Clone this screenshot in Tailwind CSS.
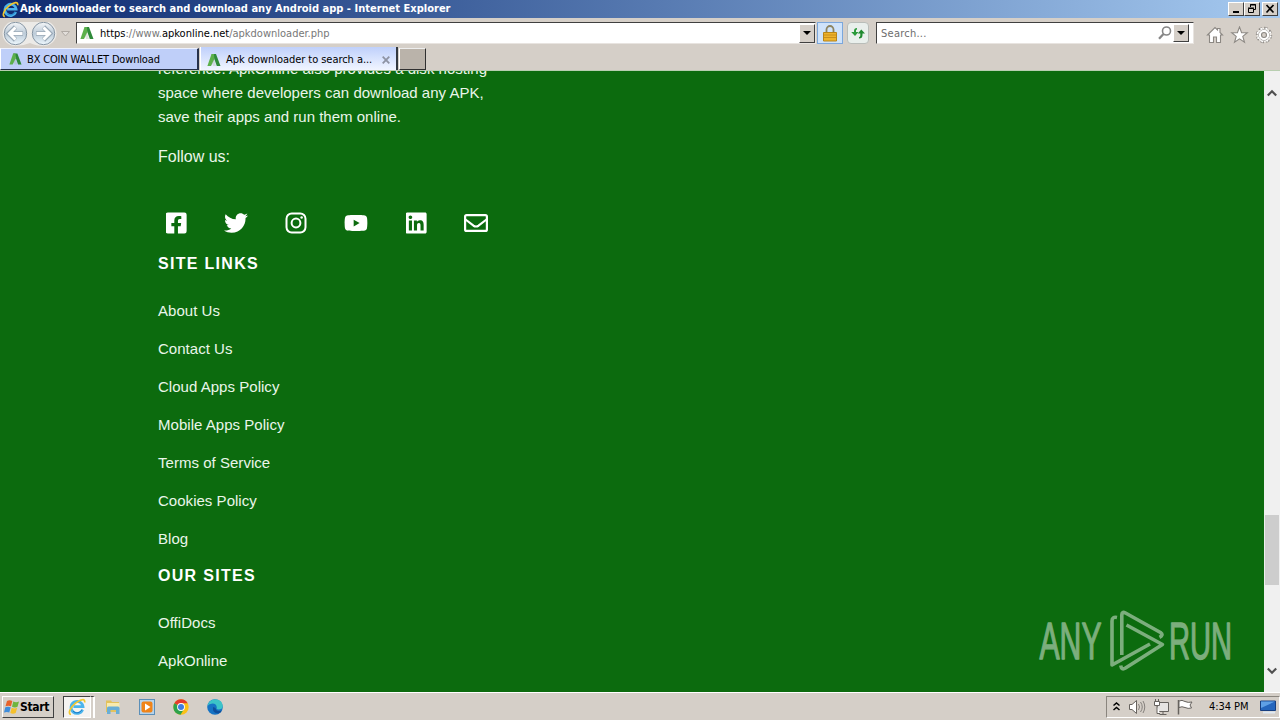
<!DOCTYPE html>
<html lang="en">
<head>
  <meta charset="UTF-8" />
  <meta name="viewport" content="width=device-width, initial-scale=1.0" />
  <title>Apk downloader to search and download any Android app</title>
  <script src="https://cdn.jsdelivr.net/npm/@tailwindcss/browser@4"></script>
</head>
<body class="w-[1280px] h-[720px] overflow-hidden flex flex-col bg-[#d5cfc8] text-black text-[11px] font-['DejaVu_Sans_Condensed','DejaVu_Sans',sans-serif]">

  <!-- Shared symbols -->
  <svg class="hidden">
    <symbol id="apk" viewBox="0 0 14 14">
      <path d="M4.5 1H9L13.5 13H9.8L6.8 4.5Z" fill="#2f8a3a" />
      <path d="M4.5 1H7L7.4 6.2L4 13H.4Z" fill="#5cb04b" />
      <path d="M7 6L9 13H6L5 10Z" fill="#a5b5a5" opacity=".35" />
    </symbol>
    <symbol id="ie" viewBox="0 0 18 18">
      <path d="M14.6 11.7A6 6 0 1 1 15 8.7H5.4" fill="none" stroke="#4bb4ec" stroke-width="2.8" />
      <path d="M14 11.5A5.4 5.4 0 0 1 5 13" fill="none" stroke="#1b78c4" stroke-width="1" />
      <path d="M3 16.5C-.5 16 2 9.5 7.500 5.200S17.500 .500 16.600 4.500" fill="none" stroke="#f2c72d" stroke-width="1.700" />
    </symbol>
  </svg>

  <!-- Title bar -->
  <header class="h-[18px] shrink-0 flex items-center pl-[2px] pr-[2px] bg-linear-to-r from-[#0f2a70] to-[#a6caf0] text-white">
    <svg class="w-[17px] h-[17px]"><use href="#ie" /></svg>
    <h1 class="ml-px font-bold whitespace-nowrap tracking-[0.01px]">Apk downloader to search and download any Android app - Internet Explorer</h1>
    <div class="ml-auto flex h-[14px] text-black">
      <div class="w-4 bg-[#d5cfc8] border border-t-white border-l-white border-r-[#404040] border-b-[#404040]">
        <svg class="w-[14px] h-3" viewBox="0 0 14 12"><path d="M4 9h6" stroke="#000" stroke-width="2" /></svg>
      </div>
      <div class="w-4 bg-[#d5cfc8] border border-t-white border-l-white border-r-[#404040] border-b-[#404040]">
        <svg class="w-[14px] h-3" viewBox="0 0 14 12" fill="none" stroke="#000">
          <path d="M5.500 4V1.500H10.500V6.500H9M5 2H11" /><path d="M3.500 5.500H8.500V9.500H3.500ZM3 5H9" />
        </svg>
      </div>
      <div class="ml-[2px] w-4 bg-[#d5cfc8] border border-t-white border-l-white border-r-[#404040] border-b-[#404040]">
        <svg class="w-[14px] h-3" viewBox="0 0 14 12"><path d="M3.500 2L10.500 9.500M10.500 2L3.500 9.500" stroke="#000" stroke-width="1.700" /></svg>
      </div>
    </div>
  </header>

  <!-- Navigation bar -->
  <div class="h-[29px] shrink-0 flex items-start pt-1">
    <svg class="w-[76px] h-[25px] shrink-0" viewBox="0 22 76 25">
      <defs>
        <linearGradient id="nav" x2="0" y2="1">
          <stop offset="0" stop-color="#f4f6f8" /><stop offset=".5" stop-color="#bccbd8" /><stop offset="1" stop-color="#edf7fd" />
        </linearGradient>
      </defs>
      <path d="M15 21H44A12 12 0 0 1 44 46Q36 46 30 43Q23 46 15 46A12 12 0 0 1 15 21Z" fill="#eceae7" />
      <g fill="url(#nav)" stroke="#8796a4">
        <circle cx="15.500" cy="33.500" r="11.200" />
        <circle cx="43.500" cy="33.500" r="11.200" />
      </g>
      <g fill="none" stroke="#9aa9b7" stroke-width="4.600">
        <path d="M23 33.500H10M15.500 27L9 33.500L15.500 40" /><path d="M36 33.500H49M43.500 27L50 33.500L43.500 40" />
      </g>
      <g fill="none" stroke="#fff" stroke-width="3">
        <path d="M22.500 33.500H10M15.500 27.500L9.500 33.500L15.500 39.500" /><path d="M36.500 33.500H49M43.500 27.500L49.500 33.500L43.500 39.500" />
      </g>
      <path d="M61.500 31.500H69.500L65.500 36Z" fill="#e2deda" stroke="#b0aaa4" />
    </svg>
    <div class="w-[740px] h-[22px] flex items-center bg-white border border-t-[#404040] border-l-[#404040] border-r-[#e8e4e0] border-b-[#e8e4e0] pl-[3px]">
      <svg class="w-[14px] h-[14px]"><use href="#apk" /></svg>
      <p class="ml-[6px] pt-[2px] text-[#777] whitespace-nowrap"><span class="text-black">https</span>://www.<span class="text-black">apkonline.net</span>/apkdownloader.php</p>
      <div class="ml-auto w-4 h-[19px] flex items-center justify-center bg-[#d5cfc8] border border-t-white border-l-white border-r-[#404040] border-b-[#404040]">
        <svg class="w-2 h-1" viewBox="0 0 8 4"><path d="M0 0H8L4 4Z" /></svg>
      </div>
    </div>
    <div class="ml-px w-[26px] h-[22px] flex items-center justify-center bg-[#cfe3fa] border border-[#7ba7dc]">
      <svg class="w-[14px] h-[17px]" viewBox="0 0 14 17">
        <path d="M3.500 8V4.500A3.500 3.500 0 0 1 10.500 4.500V8" fill="none" stroke="#8d8460" stroke-width="1.800" />
        <path d="M.5 7.500H13.500V16H.5Z" fill="#eeb32c" stroke="#b98518" />
        <path d="M1 10H13M1 12.500H13" stroke="#c98f1c" />
      </svg>
    </div>
    <div class="ml-1 w-[22px] h-[22px] flex items-center justify-center bg-[#e9efec] border border-[#b9bdb9] rounded-sm">
      <svg class="w-4 h-4" viewBox="0 0 16 16">
        <path d="M7 3Q4 3 4 6V7H1.200L5 11L8.500 7H6V5.500Q6 4.500 7 4.500Z" fill="#2a9a3b" />
        <path d="M9 13.500Q12.500 13.500 12.500 10V8.500H15L11.300 4.500L7.800 8.500H10.300V10.500Q10.300 12 9 12Z" fill="#1f8a30" />
      </svg>
    </div>
    <div class="ml-[7px] w-[318px] h-[22px] flex items-center bg-white border border-t-[#404040] border-l-[#404040] border-r-[#e8e4e0] border-b-[#e8e4e0] pl-1 pr-1">
      <span class="pt-[2px] tracking-[0.25px] text-[#6d6d6d]">Search...</span>
      <svg class="ml-auto w-[14px] h-[14px]" viewBox="0 0 14 14" fill="none" stroke="#868686">
        <circle cx="8.500" cy="5" r="4" stroke-width="1.600" /><path d="M5.500 8L1 12.800" stroke-width="2.300" />
      </svg>
      <div class="ml-[1px] w-4 h-[18px] flex items-center justify-center bg-[#d5cfc8] border border-t-white border-l-white border-r-[#404040] border-b-[#404040]">
        <svg class="w-2 h-1" viewBox="0 0 8 4"><path d="M0 0H8L4 4Z" /></svg>
      </div>
    </div>
    <svg class="ml-3 mt-[4px] w-[68px] h-[18px]" viewBox="1206 26 68 18" fill="#fff" stroke="#8c8883" stroke-width="1.100">
      <path d="M1207.500 35L1215 27.500L1217.500 30V28.500H1220V32.500L1222.500 35H1220.500V42.500H1216.500V37H1213.500V42.500H1209.500V35Z" />
      <path d="M1239.500 27L1241.600 32.600L1247.300 32.800L1242.800 36.400L1244.500 42.300L1239.500 38.900L1234.500 42.300L1236.200 36.400L1231.700 32.800L1237.400 32.600Z" />
      <circle cx="1264" cy="35" r="6.700" stroke-width="3" stroke-dasharray="3.160 2.100" />
      <circle cx="1264" cy="35" r="6.300" stroke="#fff" stroke-width="2.600" stroke-dasharray="1.700 3.248" stroke-dashoffset="-.6" />
      <circle cx="1264" cy="35" r="5.300" stroke-width=".8" />
      <circle cx="1264" cy="35" r="4.300" stroke="#fff" stroke-width="1.600" />
      <circle cx="1264" cy="35" r="2.500" fill="#d5cfc8" />
    </svg>
  </div>

  <!-- Tabs -->
  <nav class="h-6 shrink-0 flex items-end border-b border-[#b8ceb0]">
    <div class="w-[199px] h-[22px] flex items-center pl-2 bg-[#bfcff9] border border-t-[#eef2ff] border-l-white border-r-2 border-r-[#27314a] border-b-[#27314a]">
      <svg class="w-[13px] h-[14px]"><use href="#apk" /></svg>
      <span class="ml-[5px] pt-[3px] tracking-[-0.16px] whitespace-nowrap">BX COIN WALLET Download</span>
    </div>
    <div class="ml-px w-[198px] h-[23px] flex items-center pl-[6px] pr-[6px] bg-linear-to-b from-[#bfd0fb] to-[#f1f5ff] border-l border-l-white border-r-2 border-r-[#33383f]">
      <svg class="mt-[2px] w-[14px] h-[14px]"><use href="#apk" /></svg>
      <span class="ml-[5px] pt-[4px] tracking-[-0.05px] whitespace-nowrap">Apk downloader to search a...</span>
      <svg class="ml-auto mt-[2px] w-[8px] h-[8px]" viewBox="0 0 8 8"><path d="M.7 .7L7.300 7.300M7.300 .7L.7 7.300" stroke="#8e93a3" stroke-width="1.800" /></svg>
    </div>
    <div class="ml-px w-[27px] h-[22px] bg-[#bab3aa] border border-t-[#eee] border-l-white border-r-[#303030] border-b-[#303030]"></div>
  </nav>

  <!-- Page -->
  <div class="h-[621px] shrink-0 flex">
    <main class="relative flex-1 overflow-hidden bg-[#0c6b0e] pl-[158px] text-[#eaf6ea] text-[15px] font-['Liberation_Sans',Arial,sans-serif]">
      <p class="-mt-[14px] w-[345px] leading-6 tracking-[0.01px]">reference. ApkOnline also provides a disk hosting<br />space where developers can download any APK,<br />save their apps and run them online.</p>
      <p class="mt-4 text-base leading-6">Follow us:</p>

      <div class="mt-[42px] -ml-3 flex h-6 text-white">
        <a class="w-[60px] flex justify-center"><svg class="h-6" viewBox="8 0 448 512" fill="currentColor"><path d="M400 32H48A48 48 0 0 0 0 80v352a48 48 0 0 0 48 48h137.250V327.690h-63V256h63v-54.640c0-62.150 37-96.480 93.670-96.480 27.140 0 55.520 4.840 55.520 4.840v61h-31.270c-30.810 0-40.420 19.120-40.420 38.730V256h68.780l-11 71.690h-57.780V480H400a48 48 0 0 0 48-48V80a48 48 0 0 0-48-48z" /></svg></a>
        <a class="w-[60px] flex justify-center"><svg class="h-6" viewBox="0 0 512 512" fill="currentColor"><path d="M459.370 151.716c.325 4.548.325 9.097.325 13.645 0 138.720-105.583 298.558-298.558 298.558-59.452 0-114.680-17.219-161.137-47.106 8.447.974 16.568 1.299 25.340 1.299 49.055 0 94.213-16.568 130.274-44.832-46.132-.975-84.792-31.188-98.112-72.772 6.498.974 12.995 1.624 19.818 1.624 9.421 0 18.843-1.300 27.614-3.573-48.081-9.747-84.143-51.980-84.143-102.985v-1.299c13.969 7.797 30.214 12.670 47.431 13.319-28.264-18.843-46.781-51.005-46.781-87.391 0-19.492 5.197-37.360 14.294-52.954 51.655 63.675 129.300 105.258 216.365 109.807-1.624-7.797-2.599-15.918-2.599-24.040 0-57.828 46.782-104.934 104.934-104.934 30.213 0 57.502 12.670 76.670 33.137 23.715-4.548 46.456-13.320 66.599-25.340-7.798 24.366-24.366 44.833-46.132 57.827 21.117-2.273 41.584-8.122 60.426-16.243-14.292 20.791-32.161 39.308-52.628 54.253z" /></svg></a>
        <a class="w-[60px] flex justify-center">
          <svg class="w-6 h-6" viewBox="0 0 24 24" fill="none" stroke="currentColor" stroke-width="2">
            <rect x="2.500" y="2.500" width="19" height="19" rx="5.200" /><circle cx="12" cy="12" r="4.400" /><circle cx="17.600" cy="6.400" r="1.250" fill="currentColor" stroke="none" />
          </svg>
        </a>
        <a class="w-[60px] flex justify-center"><svg class="w-6 h-6" viewBox="0 0 576 512" fill="currentColor"><path d="M549.655 124.083c-6.281-23.650-24.787-42.276-48.284-48.597C458.781 64 288 64 288 64S117.220 64 74.629 75.486c-23.497 6.322-42.003 24.947-48.284 48.597-11.412 42.867-11.412 132.305-11.412 132.305s0 89.438 11.412 132.305c6.281 23.650 24.787 41.500 48.284 47.821C117.220 448 288 448 288 448s170.780 0 213.371-11.486c23.497-6.321 42.003-24.171 48.284-47.821 11.412-42.867 11.412-132.305 11.412-132.305s0-89.438-11.412-132.305zm-317.510 213.508V175.185l142.739 81.205-142.739 81.201z" /></svg></a>
        <a class="w-[60px] flex justify-center"><svg class="h-6" viewBox="8 0 448 512" fill="currentColor"><path d="M416 32H31.900C14.300 32 0 46.500 0 64.300v383.400C0 465.500 14.300 480 31.900 480H416c17.600 0 32-14.500 32-32.300V64.300c0-17.800-14.400-32.300-32-32.300zM135.400 416H69V202.200h66.500V416zm-33.200-243c-21.300 0-38.500-17.300-38.500-38.500S80.900 96 102.200 96c21.200 0 38.500 17.300 38.500 38.500 0 21.300-17.200 38.500-38.500 38.500zm282.100 243h-66.400V312c0-24.800-.5-56.700-34.500-56.700-34.600 0-39.900 27-39.900 54.900V416h-66.400V202.200h63.700v29.200h.9c8.900-16.800 30.600-34.500 62.900-34.500 67.200 0 79.700 44.300 79.700 101.900V416z" /></svg></a>
        <a class="w-[60px] flex justify-center">
          <svg class="w-6 h-6" viewBox="0 0 24 24" fill="none" stroke="currentColor" stroke-width="2.200">
            <rect x="1.100" y="4.100" width="21.800" height="15.800" rx="1.500" /><path d="M1.500 8.500L9.500 14.700Q12 16.300 14.500 14.700L22.500 8.500" />
          </svg>
        </a>
      </div>

      <h2 class="mt-[19px] text-base leading-5 font-bold tracking-[1.3px] text-white">SITE LINKS</h2>
      <ul class="mt-[18px] leading-[38px] tracking-[0.03px]">
        <li>About Us</li>
        <li>Contact Us</li>
        <li>Cloud Apps Policy</li>
        <li>Mobile Apps Policy</li>
        <li>Terms of Service</li>
        <li>Cookies Policy</li>
        <li>Blog</li>
      </ul>
      <h2 class="mt-[8px] text-base leading-5 font-bold tracking-[1.3px] text-white">OUR SITES</h2>
      <ul class="mt-[18px] leading-[38px] tracking-[0.03px]">
        <li>OffiDocs</li>
        <li>ApkOnline</li>
      </ul>

      <!-- Watermark -->
      <svg class="absolute left-[1034px] top-[534px] w-[204px] h-[72px] opacity-55" viewBox="1034 605 204 72" fill="none" stroke="#d8e6d8" stroke-width="3.600" stroke-linejoin="round">
        <g fill="#d8e6d8" stroke-width="1.300" font-family="Liberation Sans Narrow, Liberation Sans, sans-serif" font-size="52">
          <text x="1039.500" y="659" textLength="62" lengthAdjust="spacingAndGlyphs">ANY</text>
          <text x="1169" y="659" textLength="63" lengthAdjust="spacingAndGlyphs">RUN</text>
        </g>
        <path d="M1117 617.500Q1112 616.500 1112 621V665L1150 644" />
        <path d="M1121.800 655V615Q1121.800 611 1125.500 613L1160.500 632.500Q1164 635 1159.500 637.300" />
        <path d="M1126.500 625L1162.500 644.500L1125.500 668Q1121.500 670.500 1120.700 665.500" />
      </svg>
    </main>

    <!-- Scrollbar -->
    <aside class="w-4 flex flex-col items-center bg-[#f0f0f0]">
      <svg class="mt-[18px] w-[10px] h-[8px]" viewBox="0 0 10 8"><path d="M.8 6.500L5 2.300L9.200 6.500" fill="none" stroke="#505050" stroke-width="2.200" /></svg>
      <div class="mt-[418px] w-[14px] h-[70px] bg-[#cdcdcd]"></div>
      <svg class="mt-[82px] w-[10px] h-[8px]" viewBox="0 0 10 8"><path d="M.8 1.500L5 5.700L9.200 1.500" fill="none" stroke="#505050" stroke-width="2.200" /></svg>
    </aside>
  </div>

  <!-- Taskbar -->
  <footer class="h-7 shrink-0 flex items-center border-t border-t-white bg-[#d5cfc8]">
    <button class="ml-[2px] w-[52px] h-[22px] flex items-center pl-px bg-[#d5cfc8] border border-t-white border-l-white border-r-[#404040] border-b-[#404040]">
      <svg class="w-4 h-4 shrink-0" viewBox="0 0 16 16">
        <path d="M3 2Q5.500 .5 8.300 2L7 7.300Q4.500 6 1.500 7.300Z" fill="#e8622a" />
        <path d="M9.300 2.500Q12 3.800 15 2.500L13.500 7.800Q11 9 8 7.700Z" fill="#6fb53c" />
        <path d="M1.300 8.300Q4 7 6.700 8.300L5.300 13.500Q3 12.300 0 13.500Z" fill="#3f8ddb" />
        <path d="M7.700 8.800Q10.500 10 13.200 8.800L11.700 14Q9 15.300 6.300 14Z" fill="#f5c02c" />
      </svg>
      <span class="font-bold text-xs leading-4 tracking-[-0.3px]">Start</span>
    </button>
    <div class="ml-[9px] w-[28px] h-[22px] flex items-center justify-center bg-[#f5f3f1] border border-t-[#404040] border-l-[#404040] border-r-white border-b-white">
      <svg class="w-[18px] h-[18px]"><use href="#ie" /></svg>
    </div>
    <div class="w-[4px] h-[22px] border-t border-t-[#404040] border-r-2 border-r-white bg-[#d5cfc8]"></div>
    <svg class="ml-[10px] w-[16px] h-[16px]" viewBox="0 0 16 16">
      <path d="M1 1.500H6L7 3H14V13H1Z" fill="#e3c25c" /><path d="M2 4H14.500V9H2Z" fill="#f9ebae" />
      <path d="M2 15V9Q2 7.500 3.500 7.500H13Q14.500 7.500 14.500 9V15H11V11H5.500V15Z" fill="#69aed6" />
    </svg>
    <svg class="ml-[18px] w-4 h-4" viewBox="0 0 16 16">
      <rect x=".5" y=".5" width="15" height="15" fill="#b7d3ea" stroke="#5b8fb8" />
      <rect x="2.500" y="2.500" width="11" height="11" rx="2" fill="#f08418" /><path d="M6 4.500L11.500 8L6 11.500Z" fill="#fff" />
    </svg>
    <svg class="ml-[18px] w-4 h-4" viewBox="0 0 16 16">
      <circle cx="8" cy="8" r="7.700" fill="#fbc116" />
      <path d="M8 8L1.330 4.150A7.700 7.700 0 0 1 14.670 4.150H8Z" fill="#e33b2e" />
      <path d="M1.330 4.150A7.700 7.700 0 0 0 7.500 15.700L11 10L8 8Z" fill="#2da24c" />
      <circle cx="8" cy="8" r="3.900" fill="#fff" /><circle cx="8" cy="8" r="3" fill="#3f7de0" />
    </svg>
    <svg class="ml-[18px] w-4 h-4" viewBox="0 0 16 16">
      <circle cx="8" cy="8" r="7.800" fill="#1673c4" />
      <path d="M.4 7Q2 .2 8.500 .2Q15.500 1 15.800 7Q15.500 10.500 11.500 10.500Q9 10.300 9.800 8.500Q9.500 4.500 5.500 4.500Q2 4.500 .4 7Z" fill="#3cc4c8" />
      <path d="M6 8Q5 14 11.500 14.500Q14 13.500 15 11.500Q9 13 8.500 9Z" fill="#0f4f9c" />
    </svg>

    <div class="ml-auto w-[174px] h-[22px] flex items-center border border-t-[#8a857e] border-l-[#8a857e] border-r-white border-b-white">
      <svg class="ml-[6px] w-[7px] h-[9px]" viewBox="0 0 7 9" fill="none" stroke="#000" stroke-width="1.500"><path d="M.5 3.500L3.500 1L6.500 3.500M.5 8L3.500 5.500L6.500 8" /></svg>
      <svg class="ml-[9px] w-[64px] h-[18px]" viewBox="1129 698 64 18" fill="#fff" stroke="#66625e">
        <path d="M1129.500 704.500H1132L1136.500 700.500V713.500L1132 709.500H1129.500Z" />
        <path d="M1138.500 704Q1140.500 707 1138.500 710M1140.500 702Q1144 707 1140.500 712M1143 701Q1146.500 707 1143 713" fill="none" stroke="#85817d" />
        <path d="M1157.500 702.500H1168.500V711.500H1157.500ZM1159.500 714.500H1166.500M1163 711.500V714.500" fill="#e6e4e2" />
        <path d="M1154.500 701.500H1159.500V705.500H1154.500ZM1155.500 699V701.500M1158.500 699V701.500M1157 705.500V713.500H1160" />
        <path d="M1178.500 700V714.500" stroke-width="1.500" /><path d="M1179 701Q1182 699.500 1185 701.500Q1188 703 1192 702L1190 705L1191.500 708Q1188 709 1185 707.500Q1182 706 1179 707.500Z" />
      </svg>
      <time class="ml-4 pt-px tracking-[-0.05px] whitespace-nowrap">4:34 PM</time>
      <svg class="ml-auto mr-[3px] w-4 h-[14px]" viewBox="0 0 16 14">
        <path d="M.5 1H15.500V10.500H.5Z" fill="#2566bd" stroke="#173f80" /><path d="M1 1.500H15L1 8Z" fill="#5fa0e6" /><path d="M3 12.500H15" stroke="#dfe8f2" stroke-width="2" />
      </svg>
    </div>
  </footer>

</body>
</html>
